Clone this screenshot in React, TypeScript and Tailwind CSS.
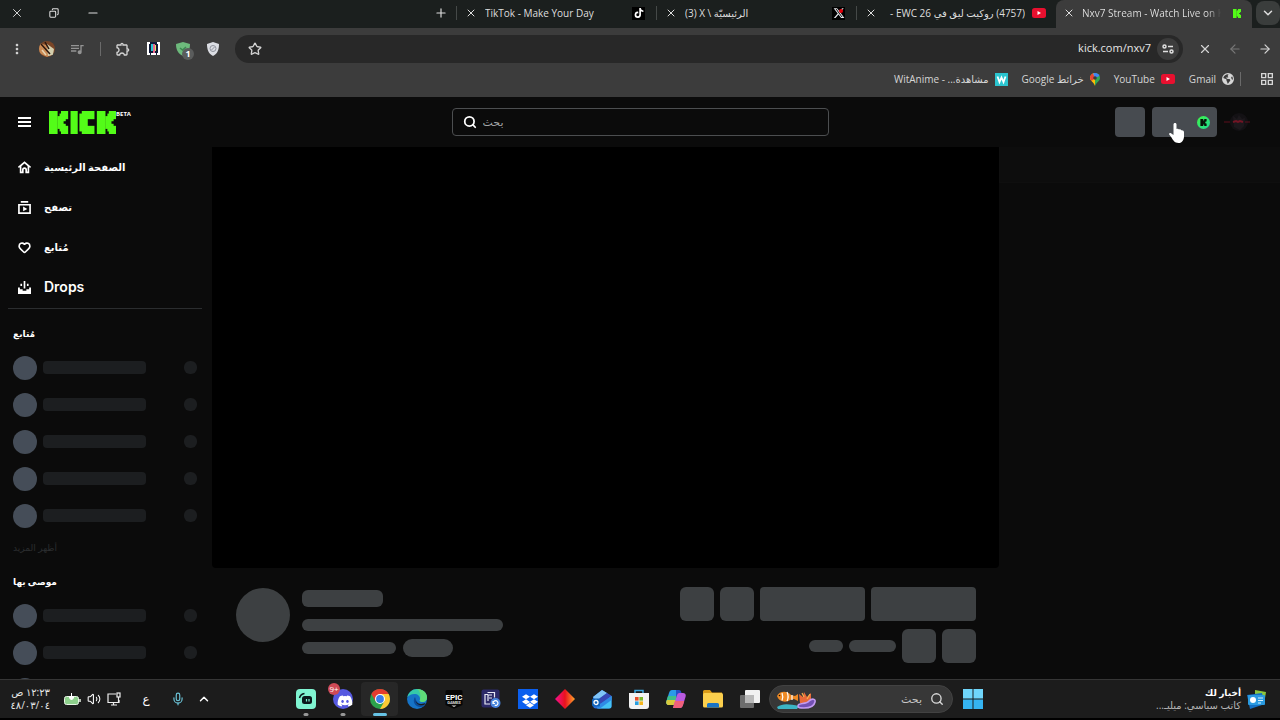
import type { ReactNode } from "react";
import {
  ArrowLeft,
  ArrowRight,
  ChevronDown,
  ChevronUp,
  Copy,
  Heart,
  Mic,
  Minus,
  Plus,
  Search,
  Star,
  Volume2,
  X,
} from "lucide-react";
import { FaDiscord, FaDropbox, FaTiktok } from "react-icons/fa";
import { FaXTwitter, FaEarthAmericas } from "react-icons/fa6";
import {
  MdMoreVert,
  MdOutlineExtension,
  MdOutlineGridView,
  MdQueueMusic,
} from "react-icons/md";

const ui = "font-['Open_Sans','DejaVu_Sans',sans-serif]";

function YouTubeIcon() {
  return (
    <svg viewBox="0 0 14 10" className="w-3.5 h-2.5 shrink-0">
      <rect width="14" height="10" rx="2.5" fill="#e8102f" />
      <path d="M5.5 3v4L9 5z" fill="#fff" />
    </svg>
  );
}

// K mark on an 8x9 block grid, shared by the logo, the favicon and the coin
function KBlocks({ x = 0 }: { x?: number }) {
  return (
    <g transform={`translate(${x} 0)`}>
      <rect width="3.6" height="9" />
      <rect x="3.5" y="2" width="1.5" height="5" />
      <rect x="4.4" y="1" width="1.2" height="7" />
      <rect x="5" width="3" height="3.2" />
      <rect x="4.5" y="3" width="2.5" height="1" />
      <rect x="4.5" y="3.900" width="1.6" height="1.2" />
      <rect x="4.5" y="5" width="2.5" height="1" />
      <rect x="5" y="5.800" width="3" height="3.2" />
    </g>
  );
}

function KickLogo() {
  return (
    <svg
      viewBox="0 0 28 9"
      preserveAspectRatio="none"
      fill="#53fc18"
      role="img"
      className="w-[67px] h-[23px]"
    >
      <KBlocks />
      <rect x="9" width="3" height="9" />
      <rect x="12.700" y="1" width="3.5" height="7" />
      <rect x="13.700" width="5.3" height="3.2" />
      <rect x="13.700" y="5.800" width="5.3" height="3.2" />
      <KBlocks x={20} />
    </svg>
  );
}

type Tab = { title: string; rtl?: boolean; icon: ReactNode };

const tabs: Tab[] = [
  {
    title: "TikTok - Make Your Day",
    icon: (
      <span className="w-[13px] h-[13px] bg-black flex items-center justify-center">
        <FaTiktok className="w-2.5 h-2.5 text-white" />
      </span>
    ),
  },
  {
    title: "(3) X \\ الرئيسيّة",
    icon: (
      <span className="relative w-[13px] h-[13px] bg-black flex items-center justify-center">
        <FaXTwitter className="w-3 h-3 text-gray-200" />
        <span className="absolute top-0.5 right-0.5 w-1 h-1 rounded-full bg-red-600" />
      </span>
    ),
  },
  { title: "(4757) روكيت ليق في EWC 26 -", rtl: true, icon: <YouTubeIcon /> },
];

function TabStrip() {
  return (
    <div className="h-7 pb-0.5 bg-[#1b1f1e] flex items-center text-[#dedede] text-[10px] leading-4">
      <div className="flex-1 flex items-center min-w-0">
        <button aria-label="Close window" className="w-[34px] flex justify-center">
          <X className="w-3.5 h-3.5" strokeWidth={1.6} />
        </button>
        <button aria-label="Restore window" className="w-10 flex justify-center">
          <Copy className="w-2.5 h-2.5 -scale-x-100" strokeWidth={2.5} />
        </button>
        <button aria-label="Minimize window" className="w-[38px] flex justify-center">
          <Minus className="w-3.5 h-3.5" strokeWidth={1.8} />
        </button>
      </div>
      <button aria-label="New tab" className="w-[30px] shrink-0 flex justify-center">
        <Plus className="w-3.5 h-3.5" />
      </button>
      {tabs.map((tab) => (
        <div key={tab.title} className="w-[200px] shrink-0 flex items-center">
          <span className="w-px h-3.5 bg-[#454948]" />
          <button aria-label="Close tab" className="w-7 flex justify-center">
            <X className="w-3 h-3" />
          </button>
          <a
            href="#tab"
            dir={tab.rtl ? "rtl" : "ltr"}
            className="w-[140px] whitespace-nowrap overflow-hidden"
          >
            {tab.title}
          </a>
          <span className="flex-1 flex justify-center pr-1">{tab.icon}</span>
        </div>
      ))}
      <div className="w-[196px] h-7 pb-0.5 self-start shrink-0 bg-[#3c3c3c] rounded-t-lg flex items-center">
        <button aria-label="Close tab" className="w-[26px] flex justify-center">
          <X className="w-3 h-3" />
        </button>
        <a
          href="#kick"
          className="w-[139px] whitespace-nowrap overflow-hidden bg-linear-to-r from-[#e4e4e4] from-90% to-transparent bg-clip-text text-transparent"
        >
          Nxv7 Stream - Watch Live on Ki
        </a>
        <span className="flex-1 flex justify-center">
          <svg viewBox="0 0 8 9" fill="#53fc18" className="w-2 h-[9px]">
            <KBlocks />
          </svg>
        </span>
      </div>
      <button
        aria-label="Search tabs"
        className="w-6 h-6 ml-1 shrink-0 rounded-lg bg-[#3a3d3c] flex items-center justify-center"
      >
        <ChevronDown className="w-3.5 h-3.5" strokeWidth={2.5} />
      </button>
    </div>
  );
}

function ToolButton({ label, children }: { label: string; children: ReactNode }) {
  return (
    <button aria-label={label} className="w-[30px] shrink-0 flex items-center justify-center">
      {children}
    </button>
  );
}

function Toolbar() {
  return (
    <div className="h-[41px] flex items-center pl-0.5 text-[#d4d4d4]">
      <ToolButton label="Menu">
        <MdMoreVert className="w-4 h-4" />
      </ToolButton>
      <ToolButton label="Profile">
        <svg viewBox="0 0 16 16" className="w-4 h-4 rounded-full">
          <rect width="16" height="16" fill="#7a4526" />
          <path d="M0 2l7 2 5 10-4 2L0 12z" fill="#c98a55" />
          <path d="M8 3l7 5-1 6-5 1z" fill="#d3cfae" />
          <path d="M2 3l9 10M6 1l4 7" stroke="#2c170f" strokeWidth="1.5" />
          <path d="M3 9l4 5" stroke="#e7d5b4" strokeWidth="1.5" />
        </svg>
      </ToolButton>
      <ToolButton label="Media">
        <MdQueueMusic className="w-4 h-4 text-[#949494]" />
      </ToolButton>
      <span className="w-4 flex justify-center">
        <span className="w-px h-3.5 bg-[#6a6a6a]" />
      </span>
      <ToolButton label="Extensions">
        <MdOutlineExtension className="w-4 h-4" />
      </ToolButton>
      <ToolButton label="Video extension">
        <svg viewBox="0 0 13 13" className="w-[13px] h-[13px]">
          <rect width="13" height="13" fill="#fff" />
          <path d="M3 0h7v2h1v9h-1v2H9v-2H4v2H3v-2H2V2h1z" fill="#101838" />
          <rect x="4" y="2" width="2" height="7" fill="#27c7d4" />
          <rect x="6" y="2" width="2" height="9" fill="#e6688d" />
          <rect x="8" y="3" width="1" height="6" fill="#e4e06b" />
        </svg>
      </ToolButton>
      <ToolButton label="Ad blocker">
        <span className="relative">
          <svg viewBox="0 0 14 14" className="w-3.5 h-3.5">
            <path d="M7 0l7 2c0 6-2 9.500-7 12C2 11.500 0 8 0 2z" fill="#6dba7c" />
            <path d="M4 6l2.500 2L10 5" stroke="#3b8650" strokeWidth="1.500" fill="none" />
          </svg>
          <span className="absolute top-1.5 left-1.5 w-3 h-3 rounded-full bg-[#5a5c5c] text-white text-[9px] leading-3 font-bold">
            1
          </span>
        </span>
      </ToolButton>
      <ToolButton label="Privacy shield">
        <svg viewBox="0 0 12 14" className="w-3 h-3.5">
          <path d="M6 0l6 2c0 6-1.500 9.500-6 12C1.500 11.500 0 8 0 2z" fill="#dcdee4" />
          <circle cx="6" cy="6.500" r="3" fill="none" stroke="#8e929c" />
          <path d="M4.500 8l3-3" stroke="#8e929c" />
        </svg>
      </ToolButton>
      <div className="flex-1 h-7 mx-[7px] rounded-full bg-[#282828] flex items-center">
        <button aria-label="Bookmark" className="w-10 flex justify-center">
          <Star className="w-3.5 h-3.5" strokeWidth={2.3} />
        </button>
        <input
          aria-label="Address"
          defaultValue="kick.com/nxv7"
          className="flex-1 min-w-0 bg-transparent text-right text-[11px] text-[#e6e6e6] outline-none"
        />
        <button
          aria-label="Site information"
          className="w-[22px] h-[22px] ml-1.5 mr-1 rounded-full bg-[#3c3c3c] flex items-center justify-center"
        >
          <svg viewBox="0 0 12 12" className="w-3 h-3" fill="none" stroke="#e0e0e0" strokeWidth="1.500">
            <circle cx="2.500" cy="3.500" r="1.500" />
            <path d="M6 3.500h5M1 8.500h5" />
            <circle cx="9.500" cy="8.500" r="1.500" />
          </svg>
        </button>
      </div>
      <ToolButton label="Stop">
        <X className="w-3.5 h-3.5" />
      </ToolButton>
      <ToolButton label="Forward">
        <ArrowLeft className="w-3.5 h-3.5 text-[#777]" />
      </ToolButton>
      <ToolButton label="Back">
        <ArrowRight className="w-3.5 h-3.5" />
      </ToolButton>
    </div>
  );
}

function Bookmark({ icon, children }: { icon: ReactNode; children: ReactNode }) {
  return (
    <a href="#bookmark" dir="rtl" className="flex items-center gap-1.5">
      {icon}
      <span>{children}</span>
    </a>
  );
}

function BookmarksBar() {
  return (
    <div className="h-5 mb-2 pr-[5px] flex items-center justify-end gap-3.5 text-[10px] leading-4 text-[#d6d6d6]">
      <Bookmark
        icon={
          <svg viewBox="0 0 13 13" className="w-[13px] h-[13px]">
            <rect width="13" height="13" fill="#2bc4cf" />
            <path d="M2.500 3.500L4.500 9l2-4.500 2 4.500 2-5.500" fill="none" stroke="#fff" strokeWidth="1.800" />
          </svg>
        }
      >
        مشاهدة... - WitAnime
      </Bookmark>
      <Bookmark
        icon={
          <svg viewBox="0 0 10 13" className="w-2.5 h-[13px]">
            <path d="M5 0a5 5 0 0 1 5 5c0 3-3.500 4-5 8z" fill="#34a853" />
            <path d="M5 0a5 5 0 0 0-5 5c0 3 4 4 5 8z" fill="#fbbc04" />
            <path d="M0 5a5 5 0 0 1 3-4.600L5 5 1.500 8z" fill="#ea4335" />
            <path d="M3 .4a5 5 0 0 1 6.500 2.500L5 5z" fill="#4285f4" />
            <circle cx="5" cy="5" r="1.800" fill="#3c3c3c" />
          </svg>
        }
      >
        خرائط Google
      </Bookmark>
      <Bookmark icon={<YouTubeIcon />}>YouTube</Bookmark>
      <Bookmark icon={<FaEarthAmericas className="w-3 h-3" />}>Gmail</Bookmark>
      <span className="w-px h-3.5 -ml-2 bg-[#6a6a6a]" />
      <button aria-label="Tab groups" className="ml-1">
        <MdOutlineGridView className="w-4 h-4" />
      </button>
    </div>
  );
}

function SiteHeader() {
  return (
    <header className="h-[50px] shrink-0 flex items-center">
      <div className="flex-1 flex items-center">
        <button aria-label="Toggle sidebar" className="w-[13px] mx-[18px] flex flex-col gap-0.5">
          <span className="h-0.5 bg-white" />
          <span className="h-0.5 bg-white" />
          <span className="h-0.5 bg-white" />
        </button>
        <a href="#home" aria-label="Kick" className="flex items-start">
          <KickLogo />
          <span className="text-white text-[6px] leading-[6px] font-bold">BETA</span>
        </a>
      </div>
      <label className="w-[377px] h-7 px-2.5 flex items-center gap-1.5 rounded border border-[#4c4e50]">
        <Search className="w-3.5 h-3.5 text-white" strokeWidth={3} />
        <input
          type="search"
          aria-label="بحث"
          placeholder="بحث"
          className="flex-1 bg-transparent text-[11px] placeholder:text-[#a4a6a8] outline-none"
        />
      </label>
      <div className="flex-1 flex items-center justify-end gap-[7px]">
        <span className="w-[30px] h-[30px] rounded bg-[#474b50]" />
        <button
          aria-label="Get Kicks"
          className="relative w-[65px] h-[30px] rounded bg-[#474b50] flex items-center justify-end pr-[7px]"
        >
          <span className="w-[13px] h-[13px] rounded-full bg-linear-to-br from-[#3ff53a] to-[#1fd98f] flex items-center justify-center">
            <svg viewBox="0 0 8 9" fill="#07120a" className="w-[7px] h-[7px]">
              <KBlocks />
            </svg>
          </span>
          <svg viewBox="0 0 16 20" className="absolute left-[17px] top-4 w-4 h-5" fill="#fff">
            <path d="M6 0c1 0 1.500.7 1.500 1.500V6c1-.6 2-.4 2.500.4 1-.4 2 0 2.300.8 1.500-.3 2.700.5 2.700 2v4c0 3-1.500 6.800-5.500 6.800-4 0-5.500-3-7-5.500L.2 11.500c-.5-1 .8-2 1.800-1.200L4.500 12V1.500C4.500.7 5 0 6 0z" />
          </svg>
        </button>
        <button aria-label="Account" className="w-7 mr-7 flex justify-center">
          <svg viewBox="0 0 28 24" className="w-7 h-6">
            <circle cx="15" cy="12" r="9" fill="#131114" />
            <path d="M9 6l4 3 2-4 3 4 3-1-1 8-4 4-6-3z" fill="#1c181c" />
            <path d="M0 12h6M21 12h5" stroke="#5c0f1d" />
            <path d="M9 12l3-1 2 1 2-1 3 1" stroke="#721424" strokeWidth="2" fill="none" />
          </svg>
        </button>
      </div>
    </header>
  );
}

const navItems = [
  {
    label: "الصفحة الرئيسية",
    icon: <path d="M1.500 6.200L7 1.500l5.500 4.700h-1.300v6H8.800V9.500a1.800 1.800 0 0 0-3.600 0v2.700H2.800v-6z" />,
  },
  {
    label: "تصفح",
    icon: (
      <>
        <path d="M3 1h8M1 4h12v9H1z" />
        <path d="M5.500 6v5L10 8.500z" fill="currentColor" stroke="none" />
      </>
    ),
  },
  { label: "مُتابع" },
  {
    label: "Drops",
    icon: (
      <>
        <path d="M7 0v8M3.500 3v2.500M10.500 3v2.500" />
        <path d="M0 7h2v2h3v1.500h4V9h3V7h2v7H0z" fill="currentColor" stroke="none" />
      </>
    ),
  },
];

function SkeletonRows({ count }: { count: number }) {
  return (
    <ul>
      {Array.from({ length: count }, (_, i) => (
        <li key={i} className="h-[37px] flex items-center">
          <span className="w-6 h-6 rounded-full bg-[#454d58]" />
          <span className="w-[103px] h-[13px] ml-1.5 rounded bg-[#1c1e20]" />
          <span className="w-[13px] h-[13px] ml-auto rounded-md bg-[#1c1e20]" />
        </li>
      ))}
    </ul>
  );
}

function Sidebar() {
  return (
    <aside className="w-[212px] shrink-0 overflow-hidden text-white font-bold font-['Inter','DejaVu_Sans',sans-serif]">
      <nav className="ml-2 mr-2.5 pb-px border-b border-[#2b2d2f]">
        {navItems.map((item) => (
          <a
            key={item.label}
            href="#nav"
            className={`h-10 pl-2.5 flex items-center gap-[13px] ${
              item.label === "Drops" ? "text-sm font-semibold" : "text-[10px]"
            }`}
          >
            {item.icon ? (
              <svg
                viewBox="0 0 14 14"
                className="w-[13px] h-[13px]"
                fill="none"
                stroke="currentColor"
                strokeWidth="1.800"
              >
                {item.icon}
              </svg>
            ) : (
              <Heart className="w-[13px] h-[13px]" strokeWidth={3} />
            )}
            {item.label}
          </a>
        ))}
      </nav>
      <section className="pr-[15px] pl-[13px] mt-[5px]">
        <h2 className="h-[35px] pt-1 flex items-center text-[9px]">مُتابع</h2>
        <SkeletonRows count={5} />
        <button className="h-7 flex items-center text-[9px] font-normal text-[#2c2e30]">
          أظهر المزيد
        </button>
        <h2 className="h-[35px] pt-1 flex items-center text-[9px]">موصى بها</h2>
        <SkeletonRows count={3} />
      </section>
    </aside>
  );
}

function StreamInfo() {
  return (
    <div className="h-[111px] shrink-0 pt-[19px] pl-6 pr-[23px] flex">
      <span className="w-[54px] h-[54px] mt-px rounded-full bg-[#3d4042]" />
      <div className="ml-3 pt-[3px]">
        <div className="w-[81px] h-[17px] rounded-md bg-[#3d4042]" />
        <div className="w-[201px] h-3 mt-3 rounded-md bg-[#3d4042]" />
        <div className="flex items-center gap-[7px] mt-2">
          <span className="w-[94px] h-3 rounded-full bg-[#3d4042]" />
          <span className="w-[50px] h-[18px] rounded-full bg-[#3d4042]" />
        </div>
      </div>
      <div className="ml-auto flex flex-col gap-2">
        <div className="flex justify-end gap-1.5">
          <span className="w-[34px] h-[34px] rounded-md bg-[#3d4042]" />
          <span className="w-[34px] h-[34px] rounded-md bg-[#3d4042]" />
          <span className="w-[105px] h-[34px] rounded bg-[#3d4042]" />
          <span className="w-[105px] h-[34px] rounded bg-[#3d4042]" />
        </div>
        <div className="flex justify-end items-center gap-1.5">
          <span className="w-[34px] h-3 rounded-full bg-[#3d4042]" />
          <span className="w-[47px] h-3 rounded-full bg-[#3d4042]" />
          <span className="w-[34px] h-[34px] rounded-md bg-[#3d4042]" />
          <span className="w-[34px] h-[34px] rounded-md bg-[#3d4042]" />
        </div>
      </div>
    </div>
  );
}

const apps: { name: string; icon: ReactNode; state?: "open" | "active"; badge?: string }[] = [
  {
    name: "Streamlabs",
    state: "open",
    icon: (
      <>
        <rect width="20" height="20" rx="4" fill="#80f5d2" />
        <path d="M3.500 9a6 6 0 0 1 5-4.500" stroke="#0b1a1c" strokeWidth="1.500" fill="none" />
        <rect x="6" y="7" width="10" height="8" rx="2.500" fill="#0b1a1c" />
        <path d="M10.500 10v2.500M13 10v2.500" stroke="#80f5d2" strokeWidth="1.200" />
      </>
    ),
  },
  {
    name: "Discord",
    state: "open",
    badge: "9+",
    icon: (
      <>
        <circle cx="10" cy="10" r="10" fill="#5659e0" />
        <FaDiscord x="4" y="4" width="12" height="12" color="#fff" />
      </>
    ),
  },
  {
    name: "Chrome",
    state: "active",
    icon: (
      <>
        <circle cx="10" cy="10" r="10" fill="#2ba24c" />
        <path d="M1.340 5A10 10 0 0 1 18.660 5L10 5l-4.330 7.500z" fill="#e33b2e" />
        <path d="M18.660 5A10 10 0 0 1 10 20l4.330-7.500L10 5z" fill="#fcc934" />
        <circle cx="10" cy="10" r="5" fill="#fff" />
        <circle cx="10" cy="10" r="3.900" fill="#3b7de8" />
      </>
    ),
  },
  {
    name: "Edge",
    icon: (
      <>
        <circle cx="10" cy="10" r="10" fill="#1673c6" />
        <path d="M.3 8.500C1.500 3 5.500 0 10 0c6 0 10 4 10 8.500 0 3-2.200 4.500-4.600 4.500-2 0-3.400-1-2.400-2.500C13.500 7 10.500 5 7.500 5 4 5 1.500 6.500.3 8.500z" fill="#35c9a9" />
        <path d="M10 0c6 0 10 4 10 8.500 0 3-2.200 4.500-4.600 4.500-2 0-3.400-1-2.400-2.500C14 6 13 2 10 0z" fill="#5fdc78" />
        <path d="M8 8c-3 4 0 10 5.500 10 2 0 3.500-.7 4.500-1.700C14 17 9 14 8 8z" fill="#0b4c9a" />
        <path d="M9 8.500c-1.500 3 1 6.500 5 6.500 2 0 3.500-.5 4.500-1.200l-1 2C13 17.500 7 15 9 8.500z" fill="#1c1c1c" />
      </>
    ),
  },
  {
    name: "Epic Games",
    icon: (
      <>
        <path d="M3 1h14a1.500 1.500 0 0 1 1.500 1.500V16L10 19.800 1.500 16V2.500A1.500 1.500 0 0 1 3 1z" fill="#050505" />
        <text x="10" y="10.500" textAnchor="middle" fontSize="8" fontWeight="700" fill="#fff" fontFamily="Roboto">
          EPIC
        </text>
        <text x="10" y="15" textAnchor="middle" fontSize="4" fontWeight="700" fill="#ddd" fontFamily="Roboto">
          GAMES
        </text>
        <path d="M7.500 16.500h5L10 18z" fill="#ddd" />
      </>
    ),
  },
  {
    name: "PC Manager",
    icon: (
      <>
        <rect x=".5" y=".5" width="18" height="18" rx="2" fill="#2d2a68" />
        <path d="M4 5.500h3M4 5v10h5M6.500 3.500h7v5M7 12V6h4M8 9h3" stroke="#e9e9f6" strokeWidth="1.200" fill="none" />
        <circle cx="14.500" cy="14" r="5" fill="#4a86dd" />
        <path d="M12.200 14.500a2.400 2.400 0 1 1 1.500 1.800M12 12v2.500h2" stroke="#fff" strokeWidth="1.200" fill="none" />
      </>
    ),
  },
  {
    name: "Dropbox",
    icon: (
      <>
        <rect width="20" height="20" fill="#0b5fee" />
        <FaDropbox x="4" y="4" width="12" height="12" color="#fff" />
      </>
    ),
  },
  {
    name: "Diamond",
    icon: (
      <>
        <defs>
          <linearGradient id="diamond">
            <stop offset=".1" stopColor="#f2107c" />
            <stop offset=".5" stopColor="#e8121d" />
            <stop offset="1" stopColor="#ffa62b" />
          </linearGradient>
        </defs>
        <path d="M10 0l10 10-10 10L0 10z" fill="url(#diamond)" />
      </>
    ),
  },
  {
    name: "Outlook",
    icon: (
      <>
        <path d="M1 8l9-7 9.500 6v10a2.500 2.500 0 0 1-2.500 2.500H4A3 3 0 0 1 1 17z" fill="#2b6fd8" />
        <path d="M1 8l9-7 5 3L4 12z" fill="#7fc4f7" />
        <path d="M15 4l4.500 3L9 15l-5-3z" fill="#3747b5" />
        <path d="M19.500 7v10a2.500 2.500 0 0 1-2.500 2.500H6z" fill="#45c3f5" />
        <path d="M19.500 7v4L8 19.500H5V17z" fill="#2f8ae6" />
        <rect y="9.500" width="8" height="8" rx="1.500" fill="#1062b8" />
        <circle cx="4" cy="13.500" r="2" fill="none" stroke="#fff" strokeWidth="1.300" />
      </>
    ),
  },
  {
    name: "Microsoft Store",
    icon: (
      <>
        <path d="M6 5V1.500h8V5" fill="none" stroke="#3ba7e0" strokeWidth="1.500" />
        <path d="M0 4h20v13a3 3 0 0 1-3 3H3a3 3 0 0 1-3-3z" fill="#f3f3f3" />
        <path d="M6 8h3.600v3.600H6z" fill="#e8502b" />
        <path d="M10.400 8H14v3.600h-3.600z" fill="#7cb82a" />
        <path d="M6 12.400h3.600V16H6z" fill="#2a9fe0" />
        <path d="M10.400 12.400H14V16h-3.600z" fill="#f7b61c" />
      </>
    ),
  },
  {
    name: "Copilot",
    icon: (
      <>
        <path d="M6 1h7l-4 13c-.5 1.500-1 2-2.500 2H3c-2.500 0-3.200-2-2.500-4L3 4c.6-2 1.500-3 3-3z" fill="#2a9be8" />
        <path d="M2 7h9l-2 7c-.5 1.500-1 2-2.500 2H3c-2.500 0-3.200-2-2.500-4z" fill="#3fbf8a" />
        <path d="M1 11h9l-1 3c-.5 1.500-1 2-2.500 2H3c-2.500 0-3.200-2-2.500-4z" fill="#d9c93c" />
        <path d="M14 19H7l4-13c.5-1.500 1-2 2.500-2H17c2.500 0 3.200 2 2.500 4L17 16c-.6 2-1.500 3-3 3z" fill="#b85ae0" />
        <path d="M18.200 12H9l-2 7h7c1.500 0 2.400-1 3-3z" fill="#f0607a" />
        <path d="M10 1h3c1.500 0 2 1 2.500 3h-2c-1.500 0-2 .5-2.500 2l-1 3z" fill="#2550c8" />
      </>
    ),
  },
  {
    name: "File Explorer",
    icon: (
      <>
        <path d="M0 2.500A1.500 1.500 0 0 1 1.500 1H7l2 2.500h10V8H0z" fill="#d99a17" />
        <rect y="4" width="20" height="14.500" rx="1.500" fill="#fbcf4d" />
        <path d="M4 18.500v-3A1.500 1.500 0 0 1 5.500 14h9a1.500 1.500 0 0 1 1.500 1.500v3z" fill="#1b74c5" />
      </>
    ),
  },
  {
    name: "Task View",
    icon: (
      <>
        <rect x="5" y="1" width="15" height="13" rx="1" fill="#f1f1f1" />
        <rect y="6" width="14" height="13" rx="1" fill="#7b7b7b" fillOpacity=".85" />
        <rect x="5" y="6" width="9" height="8" fill="#b9b9b9" />
      </>
    ),
  },
];

function Taskbar() {
  return (
    <footer className="h-[41px] shrink-0 bg-[#1c1c1c] border-t border-t-[#363636] border-b-2 border-b-black flex items-center text-white">
      <div className="w-[287px] shrink-0 flex items-center">
        <button dir="rtl" className="w-[50px] text-right text-[10px] leading-[13px] text-[#e6e6e6] whitespace-nowrap">
          ١٢:٢٣ ص
          <br />
          ٤٨/٠٣/٠٤
        </button>
        <button aria-label="System status" className="ml-3.5 flex items-center gap-1.5">
          <svg viewBox="0 0 17 13" className="w-[17px] h-[13px]">
            <rect x=".5" y="3.500" width="14" height="8" rx="2" fill="#8ed08c" stroke="#e8f5e6" />
            <path d="M16 6v3" stroke="#e8f5e6" strokeWidth="1.500" />
            <path d="M7.500 0v4M5.500 3.500h4V5l-2 2-2-2z" stroke="#fff" fill="#fff" />
          </svg>
          <Volume2 className="w-3.5 h-3.5" strokeWidth={1.8} />
          <svg viewBox="0 0 14 14" className="w-3.5 h-3.5" fill="none" stroke="#eee" strokeWidth="1.200">
            <path d="M9 2H1v8.500h11V8M4 13h6M6.500 10.500V13" />
            <rect x="10" y="1" width="3" height="4" />
            <path d="M11.500 5v5" />
          </svg>
        </button>
        <button className="w-[50px] text-xs">ع</button>
        <button aria-label="Microphone" className="w-3.5 flex justify-center">
          <Mic className="w-3.5 h-3.5 text-[#6cc4d8]" />
        </button>
        <button aria-label="Hidden icons" className="w-[38px] flex justify-center">
          <ChevronUp className="w-3.5 h-3.5" strokeWidth={2.5} />
        </button>
      </div>
      {apps.map((app) => (
        <button
          key={app.name}
          aria-label={app.name}
          className={`relative w-[37px] h-[34px] shrink-0 rounded flex items-center justify-center ${
            app.state === "active" ? "bg-[#272727]" : ""
          }`}
        >
          <svg viewBox="0 0 20 20" className="w-5 h-5">
            {app.icon}
          </svg>
          {app.badge && (
            <span className="absolute left-1 top-px w-3 h-3 rounded-full bg-[#cf4a56] text-[8px] leading-3">
              {app.badge}
            </span>
          )}
          {app.state && (
            <span
              className={`absolute bottom-0 left-1/2 -translate-x-1/2 h-[3px] rounded-full ${
                app.state === "active" ? "w-3.5 bg-[#67c3e6]" : "w-[5px] bg-[#979797]"
              }`}
            />
          )}
        </button>
      ))}
      <label className="w-[184px] h-7 ml-px pl-1.5 pr-2 shrink-0 rounded-full bg-[#373737] border border-[#424242] flex items-center">
        <svg viewBox="0 0 42 20" className="w-[42px] h-5 shrink-0">
          <path d="M1 18c6-4 12-3 22-1l-2 3H2z" fill="#3cb4c4" />
          <path d="M23 5l4 3 1-5 3 5 4-4v6l3 3-6 3-8-2z" fill="#e8693a" />
          <path d="M26 4l2 4M34 5l-3 5" stroke="#f6b24c" strokeWidth="1.200" />
          <path
            d="M22 17c0-4 8-1 11-5 3-3 7-2 6 1-1 5-6 6-11 6-4 0-6 0-6-2z"
            fill="#7350b4"
            stroke="#c39af0"
            strokeWidth="1.600"
          />
          <path d="M1 7c2-5 10-6 14-1l4 1 3-2v7l-4-2-4 1c-4 3-11 2-13-4z" fill="#ef8a24" />
          <path d="M6 4c1 2.500 1 5 0 7.500M11 3c1.500 3 1.500 6 0 9M16 6v5" stroke="#fff" strokeWidth="1.200" fill="none" />
          <circle cx="3.500" cy="6.500" r=".8" fill="#111" />
        </svg>
        <input
          type="search"
          dir="rtl"
          aria-label="بحث"
          placeholder="بحث"
          className="flex-1 min-w-0 mr-2 bg-transparent text-[11px] placeholder:text-[#c6c6c6] outline-none"
        />
        <Search className="w-3.5 h-3.5 shrink-0 text-[#d8d8d8]" strokeWidth={2.3} />
      </label>
      <button aria-label="Start" className="w-10 shrink-0 flex justify-center">
        <svg viewBox="0 0 20 20" className="w-5 h-5">
          <path d="M0 0h9.500v9.500H0zM10.500 0H20v9.500h-9.500z" fill="#6fd6fb" />
          <path d="M0 10.500h9.500V20H0zM10.500 10.500H20V20h-9.500z" fill="#35b4f2" />
        </svg>
      </button>
      <button dir="rtl" className="ml-auto pr-3.5 flex items-center gap-1.5 text-right text-[10px] leading-[13px]">
        <svg viewBox="0 0 19 19" className="w-[19px] h-[19px]">
          <path d="M8 0l11 2-2 12H8z" fill="#8cc63f" />
          <path d="M0 5l15-2 3 11-15 5z" fill="#1470c4" />
          <rect x="1" y="5" width="17" height="10" rx="1" fill="#2a9ae0" />
          <circle cx="6" cy="10" r="3" fill="#fff" />
          <path d="M11 8h5M11 10.500h5M11 13h3" stroke="#d6f0ff" />
        </svg>
        <span className="whitespace-nowrap">
          <span className="block font-bold text-[9px]">أخبار لك</span>
          <span className="block text-[#b5b5b5]">كاتب سياسي: ميليـ...</span>
        </span>
      </button>
    </footer>
  );
}

export default function App() {
  return (
    <div className={`h-screen flex flex-col overflow-hidden bg-[#0b0b0b] ${ui}`}>
      <div className="shrink-0 bg-[#3c3c3c]">
        <TabStrip />
        <Toolbar />
        <BookmarksBar />
      </div>
      <SiteHeader />
      <div className="flex-1 min-h-0 flex">
        <Sidebar />
        <main className="flex-1 min-w-0 flex flex-col">
          <div className="flex-1 min-h-0 rounded-b bg-black" />
          <StreamInfo />
        </main>
        <aside className="w-[281px] shrink-0">
          <div className="h-9 bg-[#0d0d0d] border-l border-b border-[#0f0f0f]" />
        </aside>
      </div>
      <Taskbar />
    </div>
  );
}
